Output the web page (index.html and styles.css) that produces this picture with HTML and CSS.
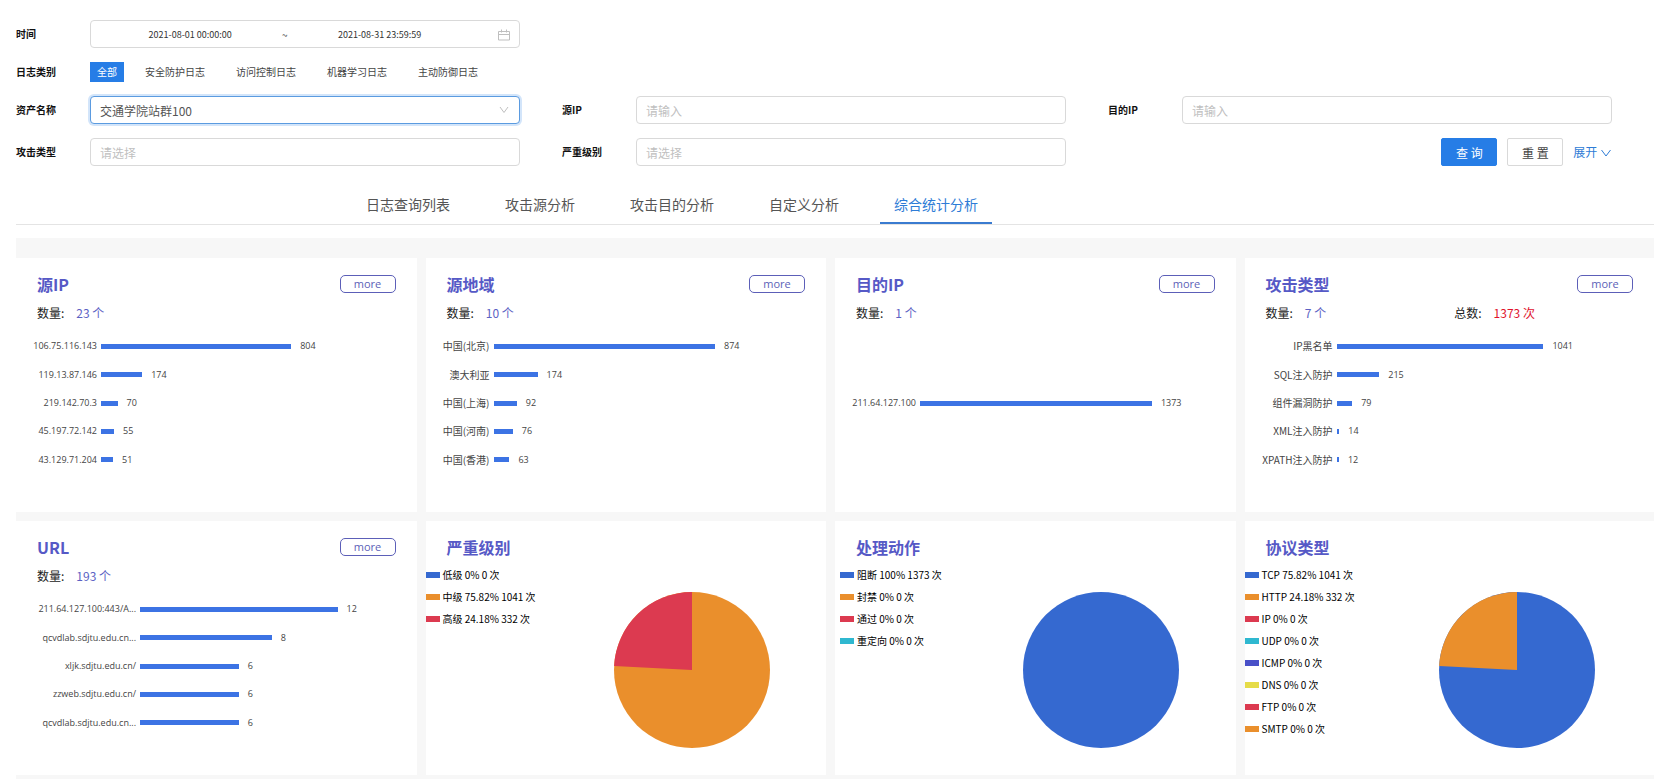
FILE: index.html
```
<!DOCTYPE html>
<html lang="zh-CN">

<head>
    <meta charset="UTF-8">
    <meta name="viewport" content="width=device-width, initial-scale=1.0">
    <title>综合统计分析</title>
    <link rel="stylesheet" href="styles.css">
</head>

<body>
    <form class="search">
        <div class="field first">
            <label for="startTime">时间</label>
            <div class="control dateRange">
                <input type="text" id="startTime" value="2021-08-01 00:00:00">
                <span class="wave">~</span>
                <input type="text" id="endTime" aria-label="结束时间" value="2021-08-31 23:59:59">
                <svg class="calendar" viewBox="0 0 12 12" width="12" height="12">
                    <path d="M0.5 2.5h11v8.5h-11zM0.5 5.5h11M3.5 0.5v3M8.5 0.5v3" />
                </svg>
            </div>
        </div>
        <div class="field first">
            <span class="name">日志类别</span>
            <div class="types">
                <button type="button" class="active">全部</button>
                <button type="button">安全防护日志</button>
                <button type="button">访问控制日志</button>
                <button type="button">机器学习日志</button>
                <button type="button">主动防御日志</button>
            </div>
        </div>
        <div class="field first">
            <label for="asset">资产名称</label>
            <div class="selectWrap">
                <select id="asset" class="control focus">
                    <option>交通学院站群100</option>
                </select>
                <svg class="arrow" viewBox="0 0 10 8" width="10" height="8">
                    <path d="M1 1l4 5.5l4 -5.5" />
                </svg>
            </div>
        </div>
        <div class="field">
            <label for="srcIp">源IP</label>
            <input type="text" id="srcIp" class="control" placeholder="请输入">
        </div>
        <div class="field">
            <label for="dstIp">目的IP</label>
            <input type="text" id="dstIp" class="control" placeholder="请输入">
        </div>
        <div class="field">
            <label for="attack">攻击类型</label>
            <select id="attack" class="control empty">
                <option>请选择</option>
            </select>
        </div>
        <div class="field">
            <label for="level">严重级别</label>
            <select id="level" class="control empty">
                <option>请选择</option>
            </select>
        </div>
        <div class="field btns">
            <button type="button" class="btn primary">查 询</button>
            <button type="button" class="btn">重 置</button>
            <a href="#" class="expand">展开
                <svg viewBox="0 0 12 8" width="12" height="8">
                    <path d="M1.5 1l4.5 6l4.5 -6" />
                </svg>
            </a>
        </div>
    </form>

    <nav class="tabs">
        <a href="#">日志查询列表</a>
        <a href="#">攻击源分析</a>
        <a href="#">攻击目的分析</a>
        <a href="#">自定义分析</a>
        <a href="#" class="active">综合统计分析</a>
    </nav>

    <div class="cards">
        <div class="card">
            <div class="head">
                <h2>源IP</h2>
                <button type="button" class="more">more</button>
            </div>
            <div class="count">
                <p>数量:<span>23 个</span></p>
            </div>
            <ul class="chart ip">
                <li><span class="key">106.75.116.143</span><div class="track"><i style="width: 80.4%"></i><b>804</b></div></li>
                <li><span class="key">119.13.87.146</span><div class="track"><i style="width: 17.4%"></i><b>174</b></div></li>
                <li><span class="key">219.142.70.3</span><div class="track"><i style="width: 7%"></i><b>70</b></div></li>
                <li><span class="key">45.197.72.142</span><div class="track"><i style="width: 5.5%"></i><b>55</b></div></li>
                <li><span class="key">43.129.71.204</span><div class="track"><i style="width: 5.1%"></i><b>51</b></div></li>
            </ul>
        </div>
        <div class="card">
            <div class="head">
                <h2>源地域</h2>
                <button type="button" class="more">more</button>
            </div>
            <div class="count">
                <p>数量:<span>10 个</span></p>
            </div>
            <ul class="chart area">
                <li><span class="key">中国(北京)</span><div class="track"><i style="width: 87.4%"></i><b>874</b></div></li>
                <li><span class="key">澳大利亚</span><div class="track"><i style="width: 17.4%"></i><b>174</b></div></li>
                <li><span class="key">中国(上海)</span><div class="track"><i style="width: 9.2%"></i><b>92</b></div></li>
                <li><span class="key">中国(河南)</span><div class="track"><i style="width: 7.6%"></i><b>76</b></div></li>
                <li><span class="key">中国(香港)</span><div class="track"><i style="width: 6.3%"></i><b>63</b></div></li>
            </ul>
        </div>
        <div class="card">
            <div class="head">
                <h2>目的IP</h2>
                <button type="button" class="more">more</button>
            </div>
            <div class="count">
                <p>数量:<span>1 个</span></p>
            </div>
            <ul class="chart ip">
                <li><span class="key">211.64.127.100</span><div class="track"><i style="width: 98.07%"></i><b>1373</b></div></li>
            </ul>
        </div>
        <div class="card">
            <div class="head">
                <h2>攻击类型</h2>
                <button type="button" class="more">more</button>
            </div>
            <div class="count">
                <p>数量:<span>7 个</span></p>
                <p>总数:<span class="red">1373 次</span></p>
            </div>
            <ul class="chart attack">
                <li><span class="key">IP黑名单</span><div class="track"><i style="width: 86.75%"></i><b>1041</b></div></li>
                <li><span class="key">SQL注入防护</span><div class="track"><i style="width: 17.92%"></i><b>215</b></div></li>
                <li><span class="key">组件漏洞防护</span><div class="track"><i style="width: 6.58%"></i><b>79</b></div></li>
                <li><span class="key">XML注入防护</span><div class="track"><i style="width: 1.17%"></i><b>14</b></div></li>
                <li><span class="key">XPATH注入防护</span><div class="track"><i style="width: 1%"></i><b>12</b></div></li>
            </ul>
        </div>

        <div class="card">
            <div class="head">
                <h2>URL</h2>
                <button type="button" class="more">more</button>
            </div>
            <div class="count">
                <p>数量:<span>193 个</span></p>
            </div>
            <ul class="chart url">
                <li><span class="key">211.64.127.100:443/A...</span><div class="track"><i style="width: 100%"></i><b>12</b></div></li>
                <li><span class="key">qcvdlab.sdjtu.edu.cn...</span><div class="track"><i style="width: 66.67%"></i><b>8</b></div></li>
                <li><span class="key">xljk.sdjtu.edu.cn/</span><div class="track"><i style="width: 50%"></i><b>6</b></div></li>
                <li><span class="key">zzweb.sdjtu.edu.cn/</span><div class="track"><i style="width: 50%"></i><b>6</b></div></li>
                <li><span class="key">qcvdlab.sdjtu.edu.cn...</span><div class="track"><i style="width: 50%"></i><b>6</b></div></li>
            </ul>
        </div>
        <div class="card">
            <div class="head">
                <h2>严重级别</h2>
            </div>
            <div class="pieBox">
                <ul class="legend">
                    <li class="c1">低级 0% 0 次</li>
                    <li class="c2">中级 75.82% 1041 次</li>
                    <li class="c3">高级 24.18% 332 次</li>
                </ul>
                <div class="pie">
                    <svg viewBox="0 0 156 156" width="156" height="156">
                        <circle cx="78" cy="78" r="78" fill="#ea8f2c" />
                        <path d="M78 78L0.1 74A78 78 0 0 1 78 0z" fill="#dc3a50" />
                    </svg>
                </div>
            </div>
        </div>
        <div class="card">
            <div class="head">
                <h2>处理动作</h2>
            </div>
            <div class="pieBox">
                <ul class="legend indent">
                    <li class="c1">阻断 100% 1373 次</li>
                    <li class="c2">封禁 0% 0 次</li>
                    <li class="c3">通过 0% 0 次</li>
                    <li class="c4">重定向 0% 0 次</li>
                </ul>
                <div class="pie">
                    <svg viewBox="0 0 156 156" width="156" height="156">
                        <circle cx="78" cy="78" r="78" fill="#3569d0" />
                    </svg>
                </div>
            </div>
        </div>
        <div class="card">
            <div class="head">
                <h2>协议类型</h2>
            </div>
            <div class="pieBox">
                <ul class="legend">
                    <li class="c1">TCP 75.82% 1041 次</li>
                    <li class="c2">HTTP 24.18% 332 次</li>
                    <li class="c3">IP 0% 0 次</li>
                    <li class="c4">UDP 0% 0 次</li>
                    <li class="c5">ICMP 0% 0 次</li>
                    <li class="c6">DNS 0% 0 次</li>
                    <li class="c3">FTP 0% 0 次</li>
                    <li class="c2">SMTP 0% 0 次</li>
                </ul>
                <div class="pie">
                    <svg viewBox="0 0 156 156" width="156" height="156">
                        <circle cx="78" cy="78" r="78" fill="#3569d0" />
                        <path d="M78 78L0.1 74A78 78 0 0 1 78 0z" fill="#ea8f2c" />
                    </svg>
                </div>
            </div>
        </div>
    </div>
</body>

</html>
```

FILE: styles.css
```
* {
    box-sizing: border-box;
}

body {
    margin: 0;
    padding: 20px 15px 0 16px;
    background: #fff;
    color: #222;
    font: 12px/20px "Noto Sans CJK SC", sans-serif;
}

h2, p, ul {
    margin: 0;
    padding: 0;
}

ul {
    list-style: none;
}

a {
    text-decoration: none;
}

button, input, select {
    font-family: inherit;
}

svg {
    fill: none;
}

/* 查询条件 */
.search {
    display: grid;
    grid-template-columns: repeat(3, 1fr);
    row-gap: 14px;
}

.field {
    display: flex;
    align-items: center;
    padding-right: 42px;
}

.first {
    grid-column: 1;
}

.field label,
.field .name {
    flex: none;
    width: 74px;
    font-size: 10px;
    font-weight: bold;
    color: #111;
}

.control {
    flex: 1;
    min-width: 0;
    width: 100%;
    height: 28px;
    padding: 1px 9px 0;
    border: 1px solid #d9d9d9;
    border-radius: 4px;
    background: #fff;
    color: #555;
    font-size: 12px;
    outline: none;
    appearance: none;
}

.control::placeholder,
.empty {
    color: #bfbfbf;
}

.selectWrap {
    flex: 1;
    position: relative;
    display: flex;
}

.focus {
    border-color: #5b9be0;
    box-shadow: 0 0 0 2px #d3e5fa;
}

.arrow {
    position: absolute;
    top: 10px;
    right: 11px;
    stroke: #bfbfbf;
}

.dateRange {
    display: flex;
    align-items: center;
}

.dateRange input {
    width: 44%;
    padding: 0;
    border: 0;
    background: none;
    color: #333;
    font-size: 9px;
    text-align: center;
    outline: none;
}

.wave {
    width: 9px;
    font-size: 10px;
    text-align: center;
}

.calendar {
    margin-left: auto;
    stroke: #bfbfbf;
}

.types {
    display: flex;
    gap: 17px;
}

.types button {
    padding: 0 7px;
    border: 0;
    background: none;
    color: #444;
    font-size: 10px;
    line-height: 20px;
    white-space: nowrap;
}

.types .active {
    margin-right: -3px;
    background: #267de6;
    color: #fff;
}

.btns {
    justify-content: flex-end;
    gap: 10px;
}

.btn {
    width: 56px;
    height: 28px;
    padding: 0;
    border: 1px solid #d9d9d9;
    border-radius: 2px;
    background: #fff;
    color: #444;
    font-size: 12px;
}

.primary {
    border-color: #267de6;
    background: #267de6;
    color: #fff;
}

.expand {
    color: #2e7cd6;
}

.expand svg {
    stroke: #2e7cd6;
}

/* 标签页 */
.tabs {
    display: flex;
    gap: 27px;
    margin: 21px 0 13px;
    padding-left: 336px;
    border-bottom: 1px solid #e4e4e4;
}

.tabs a {
    padding: 0 14px;
    border-bottom: 2px solid transparent;
    color: #555;
    font-size: 14px;
    line-height: 35px;
}

.tabs .active {
    border-color: #3a7bd0;
    color: #2e7cd6;
}

/* 统计卡片 */
.cards {
    display: grid;
    grid-template-columns: repeat(4, 1fr);
    row-gap: 9px;
    padding: 20px 0 4px;
    background: #f7f7f7;
}

.card {
    min-width: 0;
    margin-right: 9px;
    padding-top: 11px;
    background: #fff;
}

.card:nth-child(4n) {
    margin-right: 0;
}

.head {
    display: flex;
    justify-content: space-between;
    align-items: center;
    height: 30px;
    padding: 0 21px;
}

.head h2 {
    color: #5659c6;
    font-size: 16px;
    font-weight: bold;
}

.more {
    width: 56px;
    height: 18px;
    padding: 0;
    border: 1px solid #5c5fb8;
    border-radius: 5px;
    background: #fff;
    color: #5c5fb8;
    font: 11px/16px "Open Sans", sans-serif;
}

.count {
    display: flex;
    padding: 0 11px 0 21px;
    line-height: 28px;
}

.count p {
    width: 50%;
}

.count span {
    margin-left: 12px;
    color: #5c62c4;
}

.count .red {
    color: #e0122c;
}

.chart {
    display: flex;
    flex-direction: column;
    height: 142px;
    margin: 5px 0 38px;
    padding-right: 79px;
}

.chart li {
    flex: 1;
    display: flex;
    align-items: center;
}

.key {
    flex: none;
    width: 85px;
    padding-right: 4px;
    color: #444;
    font-size: 10px;
    text-align: right;
    white-space: nowrap;
}

.ip .key,
.url .key {
    font-family: "Open Sans", sans-serif;
    font-size: 9px;
}

.area .key {
    width: 68px;
}

.attack .key {
    width: 92px;
}

.url .key {
    width: 124px;
}

.track {
    flex: 1;
    display: flex;
    align-items: center;
}

.track i {
    flex: none;
    height: 5px;
    background: #3c73e4;
}

.track b {
    margin-left: 9px;
    color: #444;
    font: 9px/20px "Open Sans", sans-serif;
}

.pieBox {
    display: flex;
    margin-bottom: 27px;
}

.legend {
    width: 33%;
    padding-top: 2px;
}

.indent {
    padding-left: 5px;
}

.legend li {
    display: flex;
    align-items: center;
    gap: 3px;
    color: #000;
    font-size: 10px;
    line-height: 22px;
    white-space: nowrap;
}

.legend li::before {
    content: "";
    width: 14px;
    height: 6px;
    background: #3569d0;
}

.legend .c2::before {
    background: #ea8f2c;
}

.legend .c3::before {
    background: #dc3a50;
}

.legend .c4::before {
    background: #2fb8d0;
}

.legend .c5::before {
    background: #4950c8;
}

.legend .c6::before {
    background: #e6dc48;
}

.pie {
    flex: 1;
    display: flex;
    justify-content: center;
    align-items: flex-start;
    padding-top: 30px;
}
```
